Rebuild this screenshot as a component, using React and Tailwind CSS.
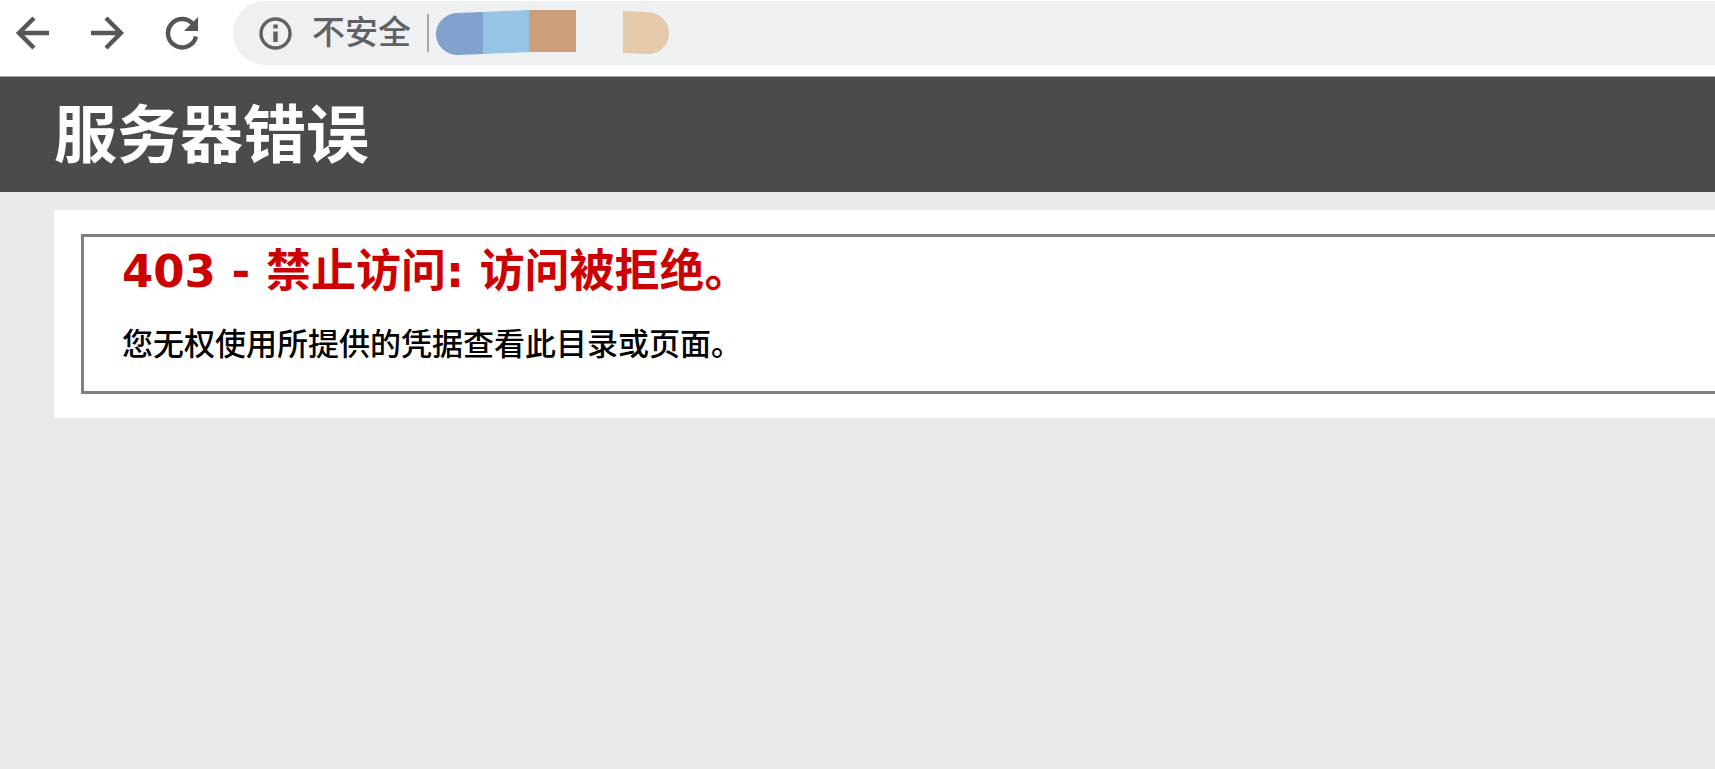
import React from 'react';

const ICON = 'size-[34px] shrink-0 text-[#55565a]';

function NavButton({ label, children }) {
  return (
    <button type="button" aria-label={label} className="flex size-[34px] items-center justify-center">
      {children}
    </button>
  );
}

// masked address, drawn as coloured blocks
function MaskedAddress() {
  return (
    <svg className="w-[234px] h-[50px] shrink-0" viewBox="0 0 234 50" aria-hidden="true">
      <path d="M47 4 L20 5 C9 6 0 15 0 26 C0 38 10 47 22 47 L47 46 Z" fill="#82a1cf" />
      <path d="M47 4 L93 2 V44 L47 46 Z" fill="#97c3e4" />
      <path d="M93 2 H140 V44 H93 Z" fill="#cd9e7a" />
      <path d="M187 3 L212 4 C224 5 233 14 233 25 C233 37 224 46 212 46 L187 45 Z" fill="#e5caa9" />
    </svg>
  );
}

function BrowserBar() {
  return (
    <div className="flex h-[77px] items-start border-b border-[#a9a9a9] bg-white pl-[15px]">
      <nav className="flex h-[66px] items-center gap-[41px]">
        <NavButton label="后退">
          <svg className={ICON} viewBox="0 0 34 34" fill="none" stroke="currentColor" strokeWidth="4.4">
            <path d="M34 17H4M19 2L4 17l15 15" />
          </svg>
        </NavButton>
        <NavButton label="前进">
          <svg className={ICON} viewBox="0 0 34 34" fill="none" stroke="currentColor" strokeWidth="4.4">
            <path d="M1 17h30M16 2l15 15-15 15" />
          </svg>
        </NavButton>
        <NavButton label="重新加载">
          <svg className={ICON} viewBox="0 0 34 34" fill="none" stroke="currentColor" strokeWidth="4.4">
            <path d="M31 20.5A14.2 14.2 0 1 1 28 8" />
            <path d="M33 1v14H19z" fill="currentColor" stroke="none" />
          </svg>
        </NavButton>
      </nav>

      <div className="ml-[34px] mt-px flex h-16 flex-1 items-center rounded-l-full bg-[#eff0f2] pl-[26px]">
        <button type="button" className="flex items-center gap-5 text-[33px] leading-[48px] font-medium text-[#5f6165]">
          <svg className="size-[33px] shrink-0" viewBox="0 0 33 33" fill="none" stroke="currentColor">
            <circle cx="16.5" cy="16.5" r="14.5" strokeWidth="3.4" />
            <path d="M16.5 14.5V25M16.5 7.5v4" strokeWidth="4.4" />
          </svg>
          不安全
        </button>
        <span className="ml-4 h-[38px] w-0.5 bg-[#a6a7a9]" />
        <span className="ml-[7px] flex">
          <MaskedAddress />
        </span>
      </div>
    </div>
  );
}

function App() {
  return (
    <div className="min-h-screen overflow-hidden bg-[#eaeaea] font-['DejaVu_Sans','Noto_Sans_CJK_SC',sans-serif]">
      <BrowserBar />

      <header className="bg-[#4b4b4b] pl-[54px] pt-[14px] pb-3">
        <h1 className="text-[63px] leading-[89px] font-bold text-white">服务器错误</h1>
      </header>

      <main className="pl-[54px] pt-[18px]">
        <div className="bg-white py-6 pl-[27px]">
          <section className="border-[3px] border-r-0 border-[#7f7f7f] pl-[38px] pt-1 pb-[22px]">
            <h2 className="text-[45px] leading-[62px] font-bold text-[#cc0000]">403 - 禁止访问: 访问被拒绝。</h2>
            <h3 className="mt-4 text-[31px] leading-[50px] font-medium text-black">您无权使用所提供的凭据查看此目录或页面。</h3>
          </section>
        </div>
      </main>
    </div>
  );
}

export default App;
